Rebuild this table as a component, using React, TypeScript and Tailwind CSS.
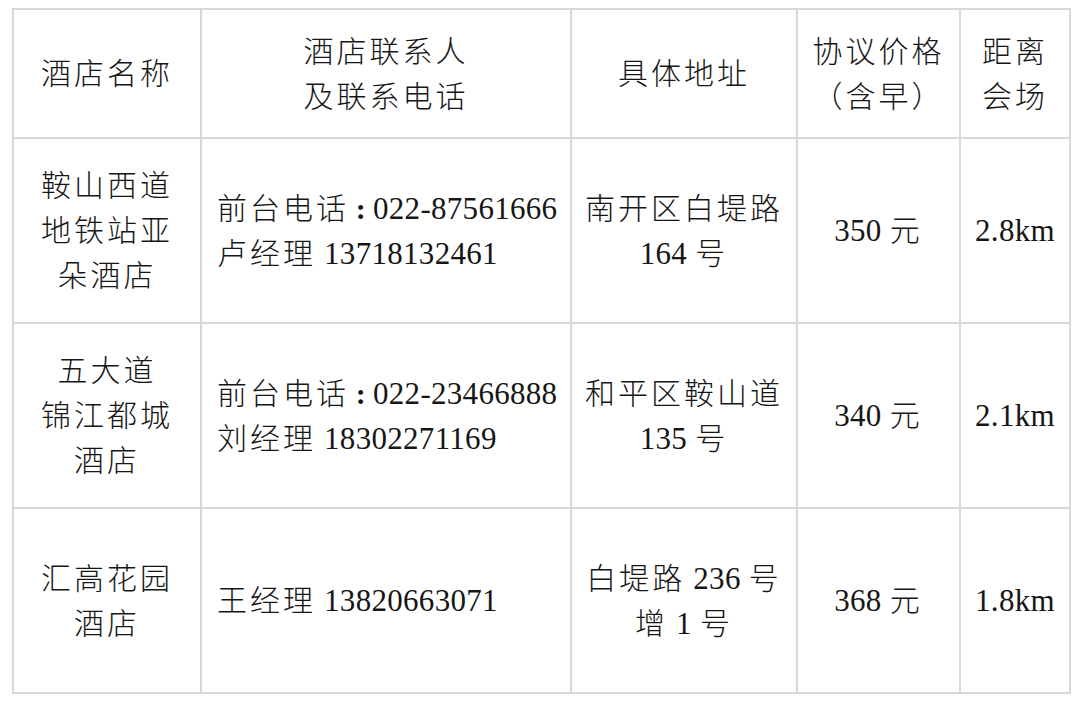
import React from "react";

const rows = [
  {
    name: ["鞍山西道", "地铁站亚", "朵酒店"],
    contact: ["前台电话:022-87561666", "卢经理 13718132461"],
    address: ["南开区白堤路", "164 号"],
    price: "350 元",
    distance: "2.8km",
  },
  {
    name: ["五大道", "锦江都城", "酒店"],
    contact: ["前台电话:022-23466888", "刘经理 18302271169"],
    address: ["和平区鞍山道", "135 号"],
    price: "340 元",
    distance: "2.1km",
  },
  {
    name: ["汇高花园", "酒店"],
    contact: ["王经理 13820663071"],
    address: ["白堤路 236 号", "增 1 号"],
    price: "368 元",
    distance: "1.8km",
  },
];

const cell = "border-2 border-[#d8d8d8] align-middle";

// CJK runs get wider spacing, like the original document font
const Mixed = ({ text }: { text: string }) => {
  const parts = text.split(/([\u4e00-\u9fff（）]+|:)/).filter(Boolean);
  return (
    <>
      {parts.map((p, i) =>
        p === ":" ? (
          <span key={i} className="inline-block w-[24px] text-center font-bold">
            :
          </span>
        ) : /[\u4e00-\u9fff（）]/.test(p) ? (
          <span key={i} className="tracking-[3px]">
            {p}
          </span>
        ) : (
          <span key={i} className="text-[31px] tracking-[0.3px] font-normal">
            {p}
          </span>
        )
      )}
    </>
  );
};

const Lines = ({ lines }: { lines: string[] }) => (
  <>
    {lines.map((l, i) => (
      <div key={i}>
        <Mixed text={l} />
      </div>
    ))}
  </>
);

export default function App() {
  return (
    <div className="w-[1080px] h-[702px] bg-white pl-[12px] pt-[8px] font-['Liberation_Serif','Noto_Sans_CJK_SC',serif] text-[30px] leading-[45px] tracking-[0.5px] text-[#161616] font-light">
      <table className="table-fixed border-collapse w-[1057px]">
        <colgroup>
          <col className="w-[188px]" />
          <col className="w-[370px]" />
          <col className="w-[226px]" />
          <col className="w-[163px]" />
          <col className="w-[110px]" />
        </colgroup>
        <thead>
          <tr className="h-[129px] text-center">
            <th className={`${cell} font-light`}>
              <Lines lines={["酒店名称"]} />
            </th>
            <th className={`${cell} font-light`}>
              <Lines lines={["酒店联系人", "及联系电话"]} />
            </th>
            <th className={`${cell} font-light`}>
              <Lines lines={["具体地址"]} />
            </th>
            <th className={`${cell} font-light`}>
              <Lines lines={["协议价格", "（含早）"]} />
            </th>
            <th className={`${cell} font-light`}>
              <Lines lines={["距离", "会场"]} />
            </th>
          </tr>
        </thead>
        <tbody>
          {rows.map((r, i) => (
            <tr key={i} className="h-[185px]">
              <td className={`${cell} text-center`}>
                <Lines lines={r.name} />
              </td>
              <td className={`${cell} text-left pl-[15px] whitespace-nowrap`}>
                <Lines lines={r.contact} />
              </td>
              <td className={`${cell} text-center`}>
                <Lines lines={r.address} />
              </td>
              <td className={`${cell} text-center`}>
                <Mixed text={r.price} />
              </td>
              <td className={`${cell} text-center`}>
                <Mixed text={r.distance} />
              </td>
            </tr>
          ))}
        </tbody>
      </table>
    </div>
  );
}
